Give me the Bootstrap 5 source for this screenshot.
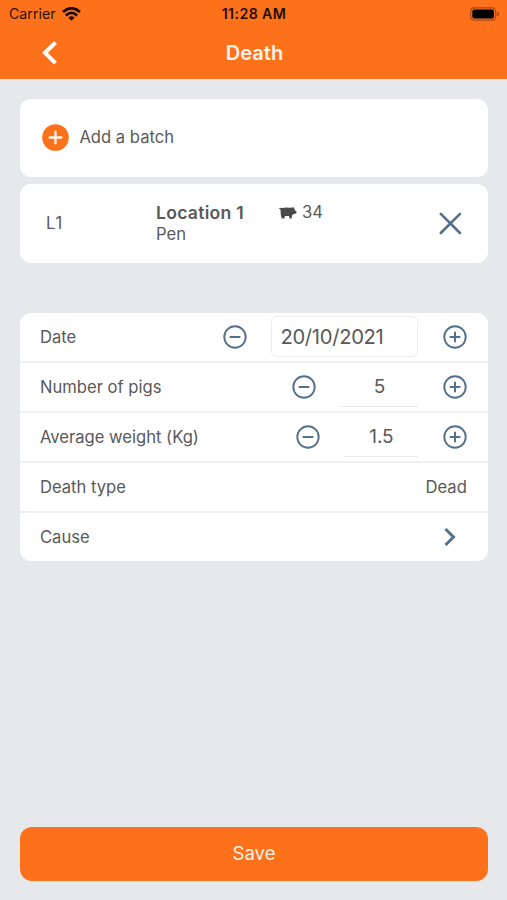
<!DOCTYPE html>
<html lang="en">
<head>
<meta charset="utf-8">
<meta name="viewport" content="width=device-width, initial-scale=1">
<title>Death</title>
<link href="https://cdn.jsdelivr.net/npm/bootstrap@5.3.0/dist/css/bootstrap.min.css" rel="stylesheet">
<style>
  body { font-family: Inter, "Liberation Sans", sans-serif; background: #e6e8ec; color: #595959; font-size: 16.6px; line-height: 21px; }
  svg { display: block; flex: none; }
  .screen { height: 900px; overflow: hidden; }
  .top-area { background: #fd711b; height: 79px; }
  .status-line { height: 27px; color: #2b1102; font-size: 14.2px; padding: 0 7px 0 9px; }
  .status-line .clock { font-weight: 600; font-size: 14.2px; letter-spacing: .4px; color: #240e02; padding-right: 1px; }
  .wifi { margin-left: -2px; }
  .title-line { height: 51px; color: #fff3ea; padding-left: 41px; }
  .title-line h1 { font-size: 20px; font-weight: 600; line-height: 24px; }
  .content { padding: 20px 19.4px 19.5px 20.4px; }
  .panel { background: #fff; border-radius: 11px; border: 0; }
  .batch { height: 78.3px; }
  .batch-add { padding: 0 0 2px 22px; gap: 10px; }
  .batch-item { margin-top: 7px; padding: 0 24.4px 0 25.6px; }
  .code { width: 110px; letter-spacing: .8px; }
  .place { width: 122px; }
  .place-name { font-size: 17.6px; letter-spacing: .25px; }
  .place-kind { padding-top: 1px; }
  .head-count { padding-top: 18px; }
  .form-panel { margin-top: 50px; }
  .form-line { height: 50px; padding: 2px 20.8px 0 19.6px; border-bottom: 2px solid #eff0f2; }
  .form-line:last-child { border-bottom: 0; height: 48.4px; }
  .stepper { gap: 24.4px; padding-bottom: 1.6px; }
  .next-icon { margin-bottom: 1.6px; }
  .value { height: 41px; font-size: 19px; line-height: 42px; text-align: center; border-bottom: 1px solid #e9e9eb; }
  .value-date { width: 147px; font-size: 20.2px; letter-spacing: -.3px; line-height: 40px; border: 1px solid #ededee; border-radius: 6px; text-align: left; padding-left: 8px; }
  .value-count { width: 78px; }
  .value-weight { width: 74px; }
  .save { background: #fd711b; color: #fff0e4; height: 54px; border: 0; border-radius: 12px; font-size: 18.6px; }
</style>
<script src="https://cdn.jsdelivr.net/npm/bootstrap@5.3.0/dist/js/bootstrap.bundle.min.js"></script>
</head>
<body>
<svg width="0" height="0" class="position-absolute" aria-hidden="true">
  <symbol id="minus" viewBox="0 0 24 24"><g fill="none" stroke="#53708c" stroke-width="1.9" stroke-linecap="round"><circle cx="12" cy="12" r="10.7"/><path d="M7.4 12h9.2" stroke-width="2"/></g></symbol>
  <symbol id="plus" viewBox="0 0 24 24"><g fill="none" stroke="#53708c" stroke-width="1.9" stroke-linecap="round"><circle cx="12" cy="12" r="10.7"/><path d="M7.4 12h9.2M12 7.4v9.2" stroke-width="2"/></g></symbol>
</svg>
<div class="screen d-flex flex-column">
  <header class="top-area">
    <div class="status-line d-flex align-items-center">
      <div class="d-flex align-items-center gap-2 col">
        <span>Carrier</span>
        <svg class="wifi" width="19" height="14" viewBox="0 0 19 14"><g fill="none" stroke="#1c0a00" stroke-width="2.7"><path d="M1 5.1Q9.5-2.6 18 5.1"/><path d="M3.8 8.4Q9.5 3.4 15.2 8.4"/></g><path d="M6.3 10.6Q9.5 8 12.7 10.6L9.5 13.8z" fill="#1c0a00"/></svg>
      </div>
      <span class="clock">11:28 AM</span>
      <div class="col d-flex justify-content-end">
        <svg width="31" height="14" viewBox="0 0 31 14"><rect x="1.6" y=".8" width="25.1" height="12.4" rx="3.6" fill="none" stroke="#a54a12" stroke-width="1.2"/><rect x="3.3" y="2.6" width="21.7" height="8.8" rx="2" fill="#000"/><path d="M28.2 4.8Q30.2 5.3 30.2 7T28.2 9.2z" fill="#a54a12"/></svg>
      </div>
    </div>
    <div class="title-line d-flex align-items-center">
      <svg width="17" height="26" viewBox="0 0 17 26"><path d="M14.5 2.5L4 12.8l10.5 10.3" fill="none" stroke="#fff" stroke-width="4"/></svg>
      <h1 class="mb-0 flex-grow-1 text-center pe-5"><span class="pe-2">Death</span></h1>
    </div>
  </header>
  <main class="content d-flex flex-column flex-grow-1">
    <section class="panel batch batch-add d-flex align-items-center">
      <svg width="27" height="27" viewBox="0 0 27 27"><circle cx="13.5" cy="13.5" r="13.3" fill="#fd711b"/><path d="M7.6 13.5h11.8M13.5 7.6v11.8" stroke="#fff5ed" stroke-width="2.3" stroke-linecap="round"/></svg>
      <span>Add a batch</span>
    </section>
    <section class="panel batch batch-item d-flex align-items-center">
      <span class="code">L1</span>
      <div class="place"><div class="place-name fw-semibold">Location 1</div><div class="place-kind">Pen</div></div>
      <div class="head-count d-flex align-items-center align-self-start flex-grow-1">
        <svg class="me-1" width="20" height="12" viewBox="0 0 20 12"><path transform="translate(.8)" d="M.2 1.3Q.6.4 3 .9Q7 .3 11 .7L13.8.6 14.6 0 15.4 1.2 16.3 3.6 17.7 4.5 17.5 6.4 15 7.1 13.3 8.2 12.9 11.5H10.8L10.2 8.9H6.1L5.7 11.5H2.9L2 8 1.7 2.3Q.6 2.3.2 1.3z" fill="#4b4b4b"/></svg>
        <span>34</span>
      </div>
      <svg width="25" height="25" viewBox="0 0 25 25"><path d="M2.8 2.8l19.2 19.2M22 2.8L2.8 22" stroke="#53708c" stroke-width="2.6" stroke-linecap="round"/></svg>
    </section>
    <section class="panel form-panel">
      <div class="form-line d-flex align-items-center justify-content-between">
        <span>Date</span>
        <div class="stepper d-flex align-items-center"><svg width="24" height="24"><use href="#minus"/></svg><div class="value value-date">20/10/2021</div><svg width="24" height="24"><use href="#plus"/></svg></div>
      </div>
      <div class="form-line d-flex align-items-center justify-content-between">
        <span>Number of pigs</span>
        <div class="stepper d-flex align-items-center"><svg width="24" height="24"><use href="#minus"/></svg><div class="value value-count">5</div><svg width="24" height="24"><use href="#plus"/></svg></div>
      </div>
      <div class="form-line d-flex align-items-center justify-content-between">
        <span>Average weight (Kg)</span>
        <div class="stepper d-flex align-items-center"><svg width="24" height="24"><use href="#minus"/></svg><div class="value value-weight">1.5</div><svg width="24" height="24"><use href="#plus"/></svg></div>
      </div>
      <div class="form-line d-flex align-items-center justify-content-between">
        <span>Death type</span><span>Dead</span>
      </div>
      <div class="form-line d-flex align-items-center justify-content-between">
        <span>Cause</span>
        <svg class="next-icon me-2" width="18" height="20" viewBox="0 0 18 20"><path d="M4.5 2l8 8-8 8" fill="none" stroke="#53708c" stroke-width="3"/></svg>
      </div>
    </section>
    <button type="button" class="btn save w-100 mt-auto p-0">Save</button>
  </main>
</div>
</body>
</html>
